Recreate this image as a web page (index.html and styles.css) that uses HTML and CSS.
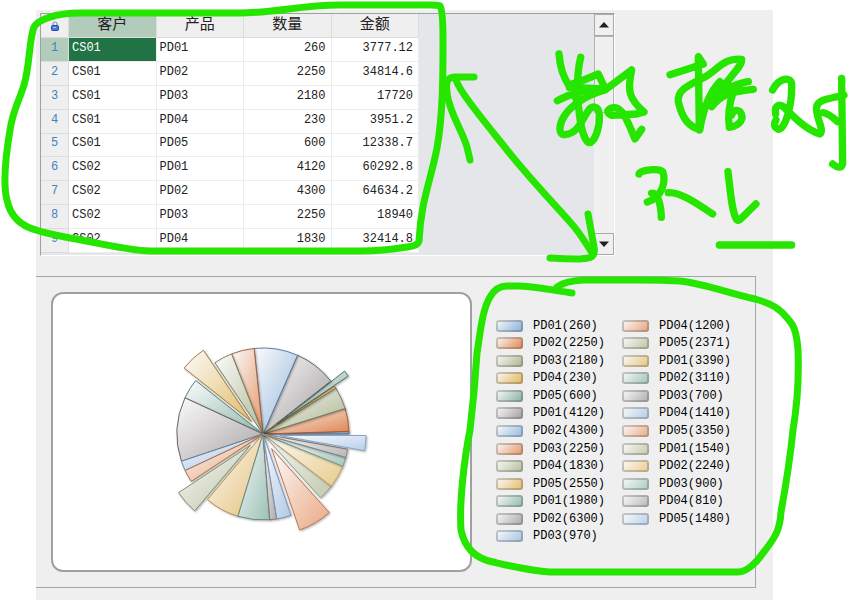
FILE: index.html
```html
<!DOCTYPE html>
<html lang="zh">
<head>
    <meta charset="UTF-8">
    <meta name="viewport" content="width=device-width, initial-scale=1.0">
    <title>客户产品数据</title>
    <link rel="stylesheet" href="styles.css">
</head>
<body>
    <main class="form">
        <!-- 数据表格 -->
        <div class="grid-box">
            <div class="grid-view">
                <table class="data-grid">
                    <thead>
                        <tr>
                            <th class="row-no">
                                <svg class="lock" viewBox="0 0 8 10" width="8" height="10">
                                    <path d="M2 5V3a2 2 0 0 1 4 0v2" fill="none" stroke="#8a93ad" stroke-width="1.2"/>
                                    <rect x="0.5" y="4.5" width="7" height="5" rx="1" fill="#4b74dc" stroke="#2747a8"/>
                                    <path d="M2 6.500h3" stroke="#a9c0ff"/>
                                </svg>
                            </th>
                            <th class="active">客户</th>
                            <th>产品</th>
                            <th>数量</th>
                            <th>金额</th>
                        </tr>
                    </thead>
                    <tbody>
                        <tr><td class="row-no active">1</td><td class="selected">CS01</td><td>PD01</td><td class="num">260</td><td class="num">3777.12</td></tr>
                        <tr><td class="row-no">2</td><td>CS01</td><td>PD02</td><td class="num">2250</td><td class="num">34814.6</td></tr>
                        <tr><td class="row-no">3</td><td>CS01</td><td>PD03</td><td class="num">2180</td><td class="num">17720</td></tr>
                        <tr><td class="row-no">4</td><td>CS01</td><td>PD04</td><td class="num">230</td><td class="num">3951.2</td></tr>
                        <tr><td class="row-no">5</td><td>CS01</td><td>PD05</td><td class="num">600</td><td class="num">12338.7</td></tr>
                        <tr><td class="row-no">6</td><td>CS02</td><td>PD01</td><td class="num">4120</td><td class="num">60292.8</td></tr>
                        <tr><td class="row-no">7</td><td>CS02</td><td>PD02</td><td class="num">4300</td><td class="num">64634.2</td></tr>
                        <tr><td class="row-no">8</td><td>CS02</td><td>PD03</td><td class="num">2250</td><td class="num">18940</td></tr>
                        <tr><td class="row-no">9</td><td>CS02</td><td>PD04</td><td class="num">1830</td><td class="num">32414.8</td></tr>
                    </tbody>
                </table>
            </div>
            <div class="scrollbar">
                <button type="button" aria-label="向上滚动"><svg viewBox="0 0 10 6" width="10" height="6"><path d="M0 5.500L5 0l5 5.500z" fill="#222"/></svg></button>
                <div class="thumb"></div>
                <button type="button" class="down" aria-label="向下滚动"><svg viewBox="0 0 10 6" width="10" height="6"><path d="M0 0.500h10L5 6z" fill="#222"/></svg></button>
            </div>
        </div>

        <!-- 饼图 -->
        <section class="chart-panel">
            <div class="chart">
                <svg id="pie" viewBox="-111 -112 220 220" width="220" height="220"></svg>
            </div>
            <ul class="legend" id="legend"></ul>
        </section>
    </main>

    <!-- 手写批注 -->
    <svg class="notes" viewBox="0 0 849 600" width="849" height="600" role="img" aria-label="数据对不上">
        <g class="pen">
            <path d="M440 6Q438 5 430 5H340C300 5 275 13 240 13H80C55 13 38 20 34 27C29 40 30 65 24 85C18 104 13 110 10 130C5 160 3 185 7 200C11 220 25 227 36 230C48 234 60 236 70 238C105 244 125 250 150 251H360C380 251 395 249 407 247Q418 246 419 241C421 200 431 180 437 148C443 115 443 75 443 40Q443 10 440 6"/>
            <path d="M474 77H455C446 77 446 84 447 93C449 112 462 130 467 147L470 160"/>
            <path d="M456 80C460 92 480 116 507 150C530 179 556 206 570 222C582 235 587 246 593 254"/>
            <path d="M588 214L594 247C596 258 590 258 580 259Q565 259 550 258"/>
            <path d="M572 293C550 290 535 286 517 286H507C499 286 494 290 490 297C482 310 480 335 477 353C475 385 473 405 470 430C465 455 459 500 461 530C465 550 478 559 493 562C510 566 530 571 550 572H738C747 572 757 562 763 553C775 538 780 530 781 512C785 490 791 450 793 430C798 400 799 375 798 350C796 325 791 323 788 319C780 309 773 304 755 299C725 292 705 284 680 281Q660 280 640 280H583Q565 281 557 287"/>
        </g>
        <g class="pen thick" transform="translate(540 40) scale(0.3333)">
            <path d="M57 42C60 80 68 110 88 138L175 102L195 145M122 52C108 110 112 190 123 255C130 290 140 306 147 308C165 308 180 260 178 225C176 195 155 195 143 215C125 240 115 280 75 284C50 284 60 245 75 225C95 195 140 165 195 150L275 90C262 150 265 175 312 216L290 222L215 226C190 216 210 202 225 203C250 205 265 250 285 297L305 268"/>
            <path d="M52 182C80 168 115 150 195 147L88 142M100 130L107 175"/>
            <path d="M390 104L490 72L475 50L478 270M480 268C445 262 425 230 415 185C410 145 460 130 500 108C540 80 560 52 605 58C608 85 545 125 515 200M480 265C490 210 505 160 540 125M515 200C540 170 560 155 640 148M530 150C560 150 590 130 625 125M580 155C565 200 565 240 568 262C600 258 615 235 600 215C590 208 580 210 575 225"/>
            <path d="M698 150C715 115 755 105 755 135C757 190 737 268 715 268C700 262 702 250 708 240M707 222C703 200 715 190 730 200C760 230 800 270 840 282C855 270 825 230 830 200C835 175 880 175 912 165M850 218Q865 220 893 245M905 115L908 370C905 388 890 382 878 372"/>
            <path d="M297 402C300 388 360 385 368 395C378 420 370 470 322 486M335 460C355 455 363 500 364 532M385 458C420 455 470 490 518 522"/>
            <path d="M564 395C570 440 575 520 591 540Q596 544 603 536L648 492M538 615H755"/>
        </g>
    </svg>

    <script src="script.js"></script>
</body>
</html>
```
FILE: styles.css
```css
* {
    margin: 0;
    padding: 0;
    box-sizing: border-box;
}

body {
    padding-top: 10px;
    background-color: #fff;
    font-family: "Liberation Mono", "Noto Sans CJK SC", monospace;
    font-size: 12px;
    color: #222;
}

.form {
    min-height: calc(100vh - 10px);
    margin: 0 76px 0 36px;
    padding-top: 3px;
    background-color: #efefef;
}

/* 表格区域 */
.grid-box {
    display: flex;
    height: 243px;
    margin: 0 158px 20px 4px;
    border: 1px solid #a0a0a0;
    border-right-color: #fff;
    border-bottom-color: #fff;
    background-color: #e4e6e9;
}

.grid-view {
    flex: 1;
    overflow: hidden;
}

.data-grid {
    width: 378px;
    height: 239px;
    table-layout: fixed;
    border-collapse: separate;
    border-spacing: 0;
    background-color: #fff;
}

.data-grid th {
    height: 24px;
    border-right: 1px solid #dcdcdc;
    border-bottom: 1px solid #dcdcdc;
    background-color: #efefef;
    font-size: 15px;
    font-weight: normal;
    line-height: 20px;
}

.data-grid td {
    padding: 0 4px 3px 3px;
    border-right: 1px solid #ececec;
    border-bottom: 1px solid #ececec;
    line-height: 16px;
}

.data-grid .num {
    padding-right: 5px;
    text-align: right;
}

.data-grid .row-no {
    width: 28px;
    padding-right: 0;
    padding-left: 0;
    border-color: #dcdcdc;
    background-color: #efefef;
    color: #3f83c0;
    text-align: center;
}

.data-grid .active {
    background-color: #b3cbbb;
}

.data-grid .selected {
    background-color: #217346;
    color: #fff;
}

.lock {
    display: block;
    margin: 0 auto;
}

/* 滚动条 */
.scrollbar {
    display: flex;
    flex-direction: column;
    width: 20px;
    background-color: #f0f0f0;
}

.scrollbar button {
    display: flex;
    align-items: center;
    justify-content: center;
    height: 22px;
    border: 1px solid #aaa;
    background-color: #f0f0f0;
}

.scrollbar .down {
    margin-top: auto;
}

.thumb {
    height: 77px;
    border: 1px solid #b4b4b4;
}

/* 图表区域 */
.chart-panel {
    display: flex;
    margin-right: 17px;
    padding: 15px 7px 15px 15px;
    border: 1px solid #a6a6a6;
    border-left: none;
}

.chart {
    display: flex;
    flex: 1;
    align-items: center;
    justify-content: center;
    height: 280px;
    border: 2px solid #a0a0a0;
    border-radius: 12px;
    background-color: #fff;
}

.slice {
    stroke-width: 1;
    stroke-linejoin: round;
    filter: drop-shadow(1px 1px 1px rgba(0, 0, 0, 0.3));
}

.legend {
    display: grid;
    grid-template-rows: repeat(13, 1fr);
    grid-auto-columns: 126px;
    grid-auto-flow: column;
    height: 228px;
    margin: 25px 0 0 24px;
    list-style: none;
    color: #000;
}

.legend li {
    display: flex;
    align-items: center;
    gap: 10px;
}

.swatch {
    width: 27px;
    height: 12px;
    border: 2px solid rgba(80, 80, 80, 0.3);
    border-radius: 3px;
    background-origin: border-box;
}

/* 批注层 */
.notes {
    position: absolute;
    top: 0;
    left: 0;
    pointer-events: none;
}

.pen {
    fill: none;
    stroke: #26e600;
    stroke-width: 7;
    stroke-linecap: round;
    stroke-linejoin: round;
}

.thick {
    stroke-width: 22;
}
```
FILE: script.js
```js
// 名称, 数量, 颜色, 边框颜色, 是否突出
const items = [
    ['PD01', 260, '#86acd6', '#55779f'],
    ['PD02', 2250, '#df824d', '#a65b35'],
    ['PD03', 2180, '#a9b38b', '#7a8260'],
    ['PD04', 230, '#dfb355', '#a17c2e'],
    ['PD05', 600, '#84ada3', '#4f7a70', true],
    ['PD01', 4120, '#a09b9b', '#686464'],
    ['PD02', 4300, '#94b8dc', '#5f7fa6'],
    ['PD03', 2250, '#e39464', '#a5623e'],
    ['PD04', 1830, '#b2bb96', '#7c8464'],
    ['PD05', 2550, '#e2bb68', '#a08044', true],
    ['PD01', 1980, '#8fb8ad', '#5a8278'],
    ['PD02', 6300, '#a9a4a4', '#6a6666'],
    ['PD03', 970, '#a3c0e2', '#6783a8'],
    ['PD04', 1200, '#e6a078', '#b0704c'],
    ['PD05', 2371, '#bac2a1', '#868d70', true],
    ['PD01', 3390, '#e6c27a', '#b0924f'],
    ['PD02', 3110, '#9bc0b7', '#668c82'],
    ['PD03', 700, '#b0abab', '#7c7878'],
    ['PD04', 1410, '#b0c9e6', '#7896bc'],
    ['PD05', 3350, '#eaa983', '#b8795a', true],
    ['PD01', 1540, '#c1c9ab', '#959c80'],
    ['PD02', 2240, '#eacb8c', '#bda366'],
    ['PD03', 900, '#a8c9c1', '#789c93'],
    ['PD04', 810, '#bab5b5', '#8c8888'],
    ['PD05', 1480, '#b8cfec', '#86a4c8', true]
];

const radius = 86;
const total = items.reduce((sum, item) => sum + item[1], 0);
let start = 0;
let defs = '';
let slices = '';
let rows = '';

items.forEach(([name, value, color, line, explode], i) => {
    const end = start + value / total * Math.PI * 2;
    const mid = (start + end) / 2;
    const offset = explode ? 17 : 0;
    const cx = Math.cos(mid) * offset;
    const cy = -Math.sin(mid) * offset;
    const x1 = cx + Math.cos(start) * radius;
    const y1 = cy - Math.sin(start) * radius;
    const x2 = cx + Math.cos(end) * radius;
    const y2 = cy - Math.sin(end) * radius;

    defs += `<linearGradient id="g${i}" x1="0" y1="0" x2="1" y2="1"><stop offset="0" stop-color="#fbfbfb"/><stop offset="1" stop-color="${color}"/></linearGradient>`;
    slices += `<path class="slice" d="M${cx} ${cy}L${x1} ${y1}A${radius} ${radius} 0 0 0 ${x2} ${y2}Z" fill="url(#g${i})" stroke="${line}"/>`;
    rows += `<li><span class="swatch" style="background-image: linear-gradient(135deg, #fbfbfb, ${color})"></span>${name}(${value})</li>`;
    start = end;
});

document.getElementById('pie').innerHTML = `<defs>${defs}</defs>${slices}`;
document.getElementById('legend').innerHTML = rows;
```
